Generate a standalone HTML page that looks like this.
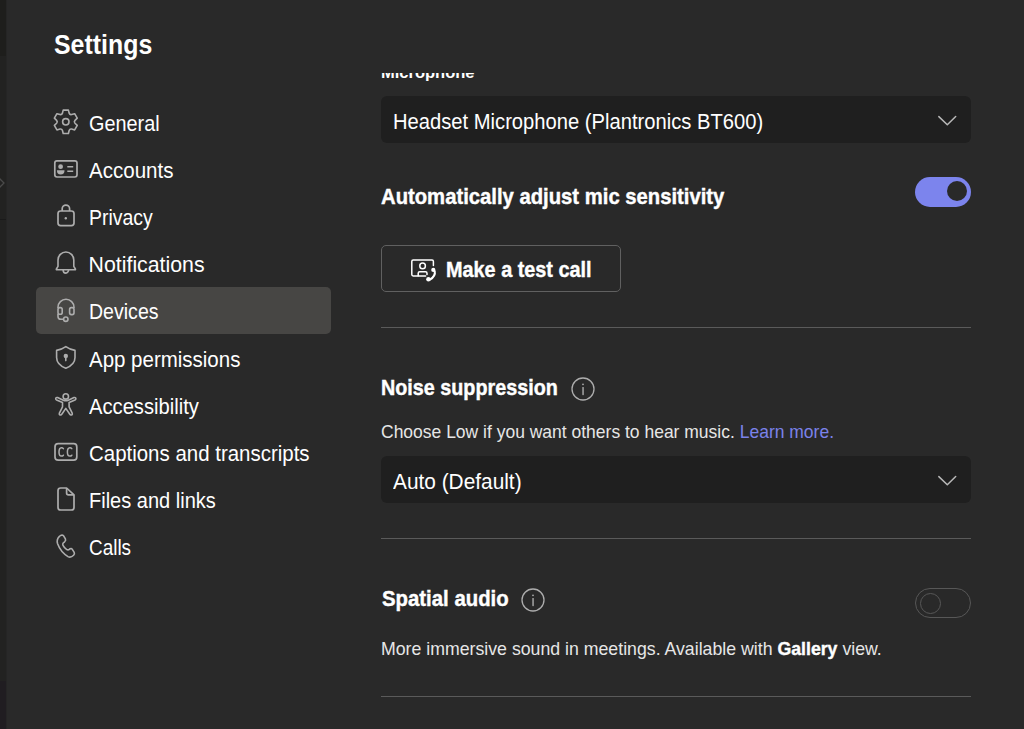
<!DOCTYPE html>
<html><head><meta charset="utf-8">
<style>
*{margin:0;padding:0;box-sizing:border-box}
html,body{width:1024px;height:729px;overflow:hidden;background:#292929}
body{position:relative;font-family:"Liberation Sans",sans-serif;color:#fff}
.t{position:absolute;white-space:nowrap;line-height:1;transform-origin:0 100%}
.b{font-weight:bold}
.ic{position:absolute;left:48px;width:36px;height:36px}
.ic svg{width:36px;height:36px;display:block}
svg{overflow:visible}
</style></head><body>
<!-- left strip -->
<div style="position:absolute;left:0;top:0;width:6px;height:729px;background:#222221"></div>
<div style="position:absolute;left:0;top:0;width:6px;height:56px;background:#1e1e1c"></div>
<div style="position:absolute;left:0;top:219px;width:6px;height:1px;background:#1a1a1a"></div>
<div style="position:absolute;left:0;top:681px;width:6px;height:48px;background:#201d21"></div>
<div style="position:absolute;left:6px;top:0;width:1px;height:729px;background:#252525"></div>
<svg style="position:absolute;left:0;top:176px" width="7" height="14"><path d="M-1 2 L4 7 L-1 12" fill="none" stroke="#4a4a4a" stroke-width="1.3"/></svg>


<!-- selected -->
<div style="position:absolute;left:36px;top:287px;width:295px;height:47px;border-radius:5px;background:#474644"></div>

<!-- nav icons -->
<div class="ic" style="top:104px"><svg viewBox="0 0 36 36"><g fill="none" stroke="#adadad" stroke-width="1.6" stroke-linejoin="round">
<path d="M14.47 9.12 L15.20 6.08 L20.40 6.08 L21.13 9.12 Q21.75 10.96 23.65 10.57 L26.65 9.69 L29.24 14.19 L26.99 16.35 Q25.70 17.80 26.99 19.25 L29.24 21.41 L26.65 25.91 L23.65 25.03 Q21.75 24.64 21.13 26.48 L20.40 29.52 L15.20 29.52 L14.47 26.48 Q13.85 24.64 11.95 25.03 L8.95 25.91 L6.36 21.41 L8.61 19.25 Q9.90 17.80 8.61 16.35 L6.36 14.19 L8.95 9.69 L11.95 10.57 Q13.85 10.96 14.47 9.12 Z"/>
<circle cx="17.8" cy="17.8" r="3.2"/></g></svg></div>

<div class="ic" style="top:152px"><svg viewBox="0 0 36 36"><g fill="none" stroke="#adadad" stroke-width="1.7">
<rect x="6.8" y="8.8" width="22.2" height="16.2" rx="2.2"/>
<path d="M19.3 14.7H25.2M19.3 19.2H25.2" stroke-width="1.5"/></g>
<g fill="#adadad"><circle cx="12.6" cy="14.7" r="2.4"/><path d="M8.9 18.2 H16.5 Q16.5 22.6 12.7 22.6 Q8.9 22.6 8.9 18.2Z"/></g></svg></div>

<div class="ic" style="top:199px"><svg viewBox="0 0 36 36"><g fill="none" stroke="#adadad" stroke-width="1.7">
<rect x="10" y="12" width="16" height="14.6" rx="2.6"/>
<path d="M14.2 12 V9.8 A3.7 3.7 0 0 1 21.6 9.8 V12"/></g>
<circle cx="17.8" cy="19.3" r="1.2" fill="#adadad"/></svg></div>

<div class="ic" style="top:246px"><svg viewBox="0 0 36 36"><g fill="none" stroke="#adadad" stroke-width="1.6" stroke-linejoin="round">
<path d="M10 20.3 V13.9 A7.9 7.9 0 0 1 25.8 13.9 V20.3 L27.4 23 Q27.7 23.7 27 23.7 H8.8 Q8.1 23.7 8.4 23 Z"/>
<path d="M15.1 23.7 A2.75 3.4 0 0 0 20.6 23.7"/></g></svg></div>

<div class="ic" style="top:293px"><svg viewBox="0 0 36 36"><g fill="none" stroke="#adadad" stroke-width="1.6" stroke-linejoin="round">
<path d="M10 15 V14.3 A8 8 0 0 1 26 14.3 V15"/>
<rect x="10" y="14.6" width="4.2" height="6.6" rx="1.8"/>
<rect x="21.6" y="14.6" width="4.4" height="7" rx="1.8"/>
<path d="M10 21 V23.4 Q10 26.2 13 26.2 H15.6"/>
<circle cx="17.8" cy="26.2" r="2.2"/></g></svg></div>

<div class="ic" style="top:340px"><svg viewBox="0 0 36 36"><g fill="none" stroke="#adadad" stroke-width="1.6" stroke-linejoin="round">
<path d="M17.8 6.6 Q13.5 9.6 8.6 10.4 V17.5 Q8.6 24.5 17.8 28.3 Q27 24.5 27 17.5 V10.4 Q22.1 9.6 17.8 6.6Z"/></g>
<circle cx="17.8" cy="15.9" r="2.2" fill="#adadad"/><rect x="17" y="16" width="1.6" height="5.4" rx="0.8" fill="#adadad"/></svg></div>

<div class="ic" style="top:387px"><svg viewBox="0 0 36 36"><g fill="none" stroke="#adadad" stroke-width="1.6" stroke-linejoin="round">
<circle cx="17.8" cy="9.4" r="2.7"/>
<path d="M15.3 13.2 L9.6 10.6 Q8 10.1 7.7 11.6 Q7.6 12.6 8.6 13.1 L14.5 15.6 V19.8 L11.4 26.2 Q10.9 27.6 12.3 28 Q13.3 28.2 13.8 27.2 L17.8 21.4 L21.8 27.2 Q22.3 28.2 23.3 28 Q24.7 27.6 24.2 26.2 L21.1 19.8 V15.6 L27 13.1 Q28 12.6 27.9 11.6 Q27.6 10.1 26 10.6 L20.3 13.2 Q17.8 14.3 15.3 13.2Z"/></g></svg></div>

<div class="ic" style="top:434px"><svg viewBox="0 0 36 36"><g fill="none" stroke="#adadad" stroke-width="1.7">
<rect x="7" y="9.7" width="21.8" height="16.4" rx="3.2"/></g>
<g fill="none" stroke="#adadad" stroke-width="1.5" stroke-linecap="round">
<path d="M15.4 14.6 Q14.6 13.6 13.4 13.7 Q11 13.9 11 17.9 Q11 22 13.4 22.1 Q14.6 22.2 15.4 21.2"/>
<path d="M23.8 14.6 Q23 13.6 21.8 13.7 Q19.4 13.9 19.4 17.9 Q19.4 22 21.8 22.1 Q23 22.2 23.8 21.2"/></g></svg></div>

<div class="ic" style="top:482px"><svg viewBox="0 0 36 36"><g fill="none" stroke="#adadad" stroke-width="1.7" stroke-linejoin="round">
<path d="M18.6 6 H12.6 Q10 6 10 8.6 V25.4 Q10 28 12.6 28 H23.4 Q26 28 26 25.4 V12.9 Z"/>
<path d="M18.6 6 V11 Q18.6 12.9 20.5 12.9 H26"/></g></svg></div>

<div class="ic" style="top:529px"><svg viewBox="0 0 36 36"><g fill="none" stroke="#adadad" stroke-width="1.6" stroke-linejoin="round">
<path d="M11.2 7.6 C12.6 6.2 14.6 5.8 15.6 6.8 L17.4 9.8 C17.9 10.8 17.6 11.8 16.6 12.8 L15.2 14 C14.6 14.8 14.6 15.6 15 16.4 C16 18.4 17.2 19.6 18.8 20.6 C19.6 21 20.6 20.9 21.4 20.3 L22.2 19.8 C23 19.3 23.8 19.6 24.3 20.4 L26.2 23.4 C26.7 24.4 26.4 25.4 25.6 26.2 C24 27.8 21.8 28.6 20 27.6 C15.4 24.8 11.6 20.2 9.6 14.8 C8.8 12.2 9.6 9.2 11.2 7.6Z"/></g></svg></div>

<!-- nav texts -->

<!-- content -->
<div style="position:absolute;left:360px;top:73px;width:640px;height:656px;overflow:hidden">
  <div class="t b" style="left:21px;top:-8.9px;font-size:16.5px">Microphone</div>
</div>

<div style="position:absolute;left:381px;top:96px;width:590px;height:47px;border-radius:6px;background:#1f1f1f"></div>
<svg style="position:absolute;left:936px;top:113px" width="22" height="16"><path d="M2.85 3.6 L11.3 11.8 L19.7 3.5" fill="none" stroke="#b8b8b8" stroke-width="1.5" stroke-linecap="round" stroke-linejoin="round"/></svg>

<div style="position:absolute;left:915px;top:177px;width:56px;height:29.5px;border-radius:15px;background:#7c84ed"></div>
<div style="position:absolute;left:946.5px;top:180.5px;width:20.6px;height:20.6px;border-radius:50%;background:#292929"></div>

<div style="position:absolute;left:381px;top:244.5px;width:240px;height:47.5px;border-radius:5px;border:1.4px solid #606060;background:#292929"></div>
<svg style="position:absolute;left:405px;top:254px" width="36" height="32" viewBox="0 0 36 32"><g fill="none" stroke="#fff" stroke-width="1.5" stroke-linecap="round">
<path d="M28.4 11.6 V7.4 Q28.4 6 27 6 H8.2 Q6.8 6 6.8 7.4 V20.6 Q6.8 22 8.2 22 H20.6"/>
<circle cx="17.6" cy="11.9" r="2.8"/>
<path d="M13.2 21.8 V19.3 Q13.2 17.8 14.7 17.8 H20.5 Q22 17.8 22 19.3 V20.4"/></g>
<circle cx="28.3" cy="15.9" r="2.1" fill="#fff"/><circle cx="23.4" cy="25.2" r="2.2" fill="#fff"/>
<path d="M29.7 16.6 Q31 22.4 24.2 26.2" fill="none" stroke="#fff" stroke-width="2"/></svg>

<div style="position:absolute;left:381px;top:327px;width:590px;height:1px;background:#5a5a5a"></div>

<svg style="position:absolute;left:571px;top:377px" width="24" height="24" viewBox="0 0 24 24"><circle cx="12" cy="12" r="11" fill="none" stroke="#adadad" stroke-width="1.3"/><circle cx="12" cy="7.3" r="0.9" fill="#adadad"/><rect x="11.35" y="9.9" width="1.4" height="8.3" rx="0.6" fill="#adadad"/></svg>

<div style="position:absolute;left:381px;top:456px;width:590px;height:47px;border-radius:6px;background:#1f1f1f"></div>
<svg style="position:absolute;left:936px;top:473px" width="22" height="16"><path d="M2.85 3.6 L11.3 11.8 L19.7 3.5" fill="none" stroke="#b8b8b8" stroke-width="1.5" stroke-linecap="round" stroke-linejoin="round"/></svg>

<div style="position:absolute;left:381px;top:538px;width:590px;height:1px;background:#5a5a5a"></div>

<svg style="position:absolute;left:521px;top:588px" width="24" height="24" viewBox="0 0 24 24"><circle cx="12" cy="12" r="11" fill="none" stroke="#adadad" stroke-width="1.3"/><circle cx="12" cy="7.3" r="0.9" fill="#adadad"/><rect x="11.35" y="9.9" width="1.4" height="8.3" rx="0.6" fill="#adadad"/></svg>
<div style="position:absolute;left:915px;top:588px;width:56px;height:30px;border-radius:15px;border:1.5px solid #575757"></div>
<div style="position:absolute;left:919.8px;top:593px;width:21px;height:21px;border-radius:50%;border:1.5px solid #575757"></div>

<div style="position:absolute;left:381px;top:696px;width:590px;height:1px;background:#5a5a5a"></div>
<div class="t b" style="left:54.30px;top:30.72px;font-size:27.5px;transform:scaleX(0.9057)">Settings</div>
<div class="t" style="left:89.30px;top:113.67px;font-size:21.3px;transform:scaleX(0.9315)">General</div>
<div class="t" style="left:89.30px;top:160.67px;font-size:21.3px;transform:scaleX(0.9651)">Accounts</div>
<div class="t" style="left:89.30px;top:207.67px;font-size:21.3px;transform:scaleX(0.9118)">Privacy</div>
<div class="t" style="left:88.60px;top:254.67px;font-size:21.3px;transform:scaleX(1.0000)">Notifications</div>
<div class="t" style="left:89.30px;top:301.67px;font-size:21.3px;transform:scaleX(0.9178)">Devices</div>
<div class="t" style="left:89.30px;top:349.67px;font-size:21.3px;transform:scaleX(0.9615)">App permissions</div>
<div class="t" style="left:89.30px;top:396.67px;font-size:21.3px;transform:scaleX(0.9478)">Accessibility</div>
<div class="t" style="left:89.30px;top:443.67px;font-size:21.3px;transform:scaleX(0.9604)">Captions and transcripts</div>
<div class="t" style="left:89.30px;top:490.67px;font-size:21.3px;transform:scaleX(0.9394)">Files and links</div>
<div class="t" style="left:89.30px;top:537.67px;font-size:21.3px;transform:scaleX(0.8889)">Calls</div>
<div class="t" style="left:393.30px;top:111.50px;font-size:21.5px;transform:scaleX(0.9386)">Headset Microphone (Plantronics BT600)</div>
<div class="t b" style="left:381.00px;top:186.50px;font-size:21.5px;transform:scaleX(0.9422);-webkit-text-stroke:0.4px #fff">Automatically adjust mic sensitivity</div>
<div class="t b" style="left:446.30px;top:259.50px;font-size:21.5px;transform:scaleX(0.9226);-webkit-text-stroke:0.4px #fff">Make a test call</div>
<div class="t b" style="left:381.30px;top:377.50px;font-size:21.5px;transform:scaleX(0.9191);-webkit-text-stroke:0.4px #fff">Noise suppression</div>
<div class="t" style="left:381.30px;top:423.04px;font-size:18.5px;transform:scaleX(0.9453);color:#e6e6e6">Choose Low if you want others to hear music. <span style="color:#7b82ea">Learn more.</span></div>
<div class="t" style="left:393.00px;top:471.50px;font-size:21.5px;transform:scaleX(0.9695)">Auto (Default)</div>
<div class="t b" style="left:382.00px;top:588.50px;font-size:21.5px;transform:scaleX(0.9470);-webkit-text-stroke:0.4px #fff">Spatial audio</div>
<div class="t" style="left:381.30px;top:640.04px;font-size:18.5px;transform:scaleX(0.9574);color:#e6e6e6">More immersive sound in meetings. Available with <b style="color:#fff;-webkit-text-stroke:0.4px #fff">Gallery</b> view.</div>
</body></html>
